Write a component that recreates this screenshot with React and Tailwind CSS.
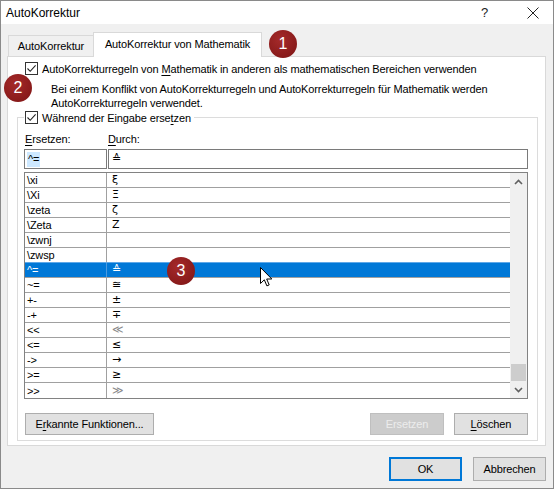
import React from "react";

const rows = [
  ["\\xi", "ξ"],
  ["\\Xi", "Ξ"],
  ["\\zeta", "ζ"],
  ["\\Zeta", "Ζ"],
  ["\\zwnj", ""],
  ["\\zwsp", ""],
  ["^=", "≙", true],
  ["~=", "≅"],
  ["+-", "±"],
  ["-+", "∓"],
  ["<<", "≪", false, true],
  ["<=", "≤"],
  ["->", "→"],
  [">=", "≥"],
  [">>", "≫", false, true],
];

function Check() {
  return (
    <span className="w-[13px] h-[13px] border border-[#333333] bg-white flex items-center justify-center shrink-0">
      <svg width="11" height="11" viewBox="0 0 11 11">
        <path d="M1.5 5.5 L4.2 8.3 L9.6 2.4" stroke="#222" strokeWidth="1.1" fill="none" />
      </svg>
    </span>
  );
}

function Badge({ n, className }) {
  return (
    <div
      className={`absolute w-[28px] h-[28px] rounded-full bg-[radial-gradient(circle_at_40%_35%,#a52a2a,#7d1414)] flex items-center justify-center text-white text-[16px] leading-none font-['Liberation_Sans',sans-serif] ${className}`}
    >
      {n}
    </div>
  );
}

function Btn({ children, className = "" }) {
  return (
    <div
      className={`h-[22px] bg-[#e1e1e1] border border-[#adadad] flex items-center justify-center ${className}`}
    >
      {children}
    </div>
  );
}

export default function App() {
  return (
    <div className="w-[554px] h-[489px] bg-[#f0f0f0] border border-[#8a8a8a] flex flex-col relative overflow-hidden text-[11px] tracking-[-0.12px] text-black font-['Liberation_Sans',Arial,sans-serif] leading-[14px]">
      {/* title bar */}
      <div className="h-[23px] bg-white flex items-center pl-[5px] pr-[14px] shrink-0 pt-[1px]">
        <span className="text-[12px] tracking-normal">AutoKorrektur</span>
        <span className="ml-auto mr-[39px] text-[13px] text-[#222]">?</span>
        <svg width="12" height="12" viewBox="0 0 12 12">
          <path d="M0.5 0.5 L11.5 11.5 M11.5 0.5 L0.5 11.5" stroke="#222" strokeWidth="1" />
        </svg>
      </div>

      {/* body */}
      <div className="flex flex-col pl-[6px] shrink-0">
        {/* tabs */}
        <div className="h-[32px] flex items-end pl-[1px]">
          <div className="w-[85px] h-[21px] border-t border-l border-[#d9d9d9] bg-[#f0f0f0] flex items-center justify-center">
            AutoKorrektur
          </div>
          <div className="relative z-10 -mb-[1px] w-[169px] h-[25px] border-t border-x border-[#d9d9d9] bg-white flex items-center justify-center pb-[2px]">
            AutoKorrektur von Mathematik
          </div>
        </div>

        {/* panel */}
        <div className="w-[539px] h-[390px] bg-white border border-[#d9d9d9] flex flex-col pl-[9px] pt-[5px]">
          <div className="flex items-center h-[13px] pl-[8px]">
            <Check />
            <span className="ml-[4px]">
              AutoKorrekturregeln von <u className="underline-offset-2">M</u>athematik in anderen als mathematischen Bereichen verwenden
            </span>
          </div>
          <div className="pl-[34px] mt-[7px]">
            Bei einem Konflikt von AutoKorrekturregeln und AutoKorrekturregeln für Mathematik werden
            <br />
            AutoKorrekturregeln verwendet.
          </div>

          <fieldset className="mt-[1px] w-[521px] border border-[#dcdcdc] pl-[6px] pr-[9px] pb-[5px]">
            <legend className="pl-[1px] pr-[3px]">
              <div className="flex items-center h-[13px]">
                <Check />
                <span className="ml-[4px]">
                  Während der Eingabe erse<u className="underline-offset-2">t</u>zen
                </span>
              </div>
            </legend>

            <div className="pt-[8px] flex">
              <div className="w-[84px] pl-[1px]">
                <u className="underline-offset-2">E</u>rsetzen:
              </div>
              <div>
                <u className="underline-offset-2">D</u>urch:
              </div>
            </div>

            <div className="mt-[3px] flex gap-[1px]">
              <div className="w-[83px] h-[20px] border border-[#7a7a7a] bg-white flex items-center pl-[2px]">
                <span className="bg-[#cde8ff] px-[1px] leading-[15px]">^=</span>
              </div>
              <div className="flex-1 h-[20px] border border-[#7a7a7a] bg-white flex items-center pl-[3px] font-['DejaVu_Sans',sans-serif] text-[11px]">
                ≙
              </div>
            </div>

            {/* list */}
            <div className="mt-[3px] w-[504px] h-[227px] border border-[#828282] bg-white flex">
              <div className="flex-1 flex flex-col">
                {rows.map(([a, b, sel, light], i) => (
                  <div
                    key={i}
                    className={`h-[15px] flex ${i < rows.length - 1 ? "border-b border-[#a0a0a0]" : ""} ${
                      sel ? "bg-[#0078d7] text-white border-t border-t-[#5fa8e8] -mt-[1px] h-[16px]" : ""
                    }`}
                  >
                    <div
                      className={`w-[82px] pl-[2px] border-r ${
                        sel ? "border-[#4c9be0]" : "border-[#a0a0a0]"
                      } flex items-center`}
                    >
                      {a}
                    </div>
                    <div
                      className={`pl-[5px] flex items-center font-['DejaVu_Sans',sans-serif] text-[11px] ${
                        light ? "text-[#8a8a8a]" : ""
                      }`}
                    >
                      {b}
                    </div>
                  </div>
                ))}
              </div>
              <div className="w-[17px] bg-[#f0f0f0] flex flex-col items-center">
                <div className="h-[17px] flex items-center justify-center">
                  <svg width="9" height="6" viewBox="0 0 9 6">
                    <path d="M1 5 L4.5 1.5 L8 5" stroke="#606060" strokeWidth="1.6" fill="none" />
                  </svg>
                </div>
                <div className="flex-1" />
                <div className="w-[15px] h-[17px] bg-[#cdcdcd]" />
                <div className="h-[17px] flex items-center justify-center">
                  <svg width="9" height="6" viewBox="0 0 9 6">
                    <path d="M1 1 L4.5 4.5 L8 1" stroke="#606060" strokeWidth="1.6" fill="none" />
                  </svg>
                </div>
              </div>
            </div>

            <div className="mt-[14px] flex items-center pl-[1px]">
              <Btn className="w-[129px]">
                <span>
                  E<u className="underline-offset-2">r</u>kannte Funktionen...
                </span>
              </Btn>
              <div className="flex-1" />
              <div className="w-[74px] h-[22px] bg-[#cccccc] border border-[#bfbfbf] flex items-center justify-center text-[#ececec]">
                Ersetzen
              </div>
              <Btn className="w-[74px] ml-[10px]">
                <span>
                  <u className="underline-offset-2">L</u>öschen
                </span>
              </Btn>
            </div>
          </fieldset>
        </div>
      </div>

      {/* footer */}
      <div className="flex justify-end gap-[11px] pt-[11px] pr-[7px]">
        <div className="w-[73px] h-[24px] bg-[#e1e1e1] border-2 border-[#0078d7] flex items-center justify-center">
          OK
        </div>
        <div className="w-[73px] h-[24px] bg-[#e1e1e1] border border-[#adadad] flex items-center justify-center">
          Abbrechen
        </div>
      </div>

      {/* annotations */}
      <Badge n="1" className="left-[268px] top-[29px]" />
      <Badge n="2" className="left-[3px] top-[73px]" />
      <Badge n="3" className="left-[166px] top-[256px]" />

      {/* mouse cursor */}
      <svg className="absolute left-[259px] top-[266px]" width="13" height="21" viewBox="0 0 13 21">
        <path
          d="M0.5 0.5 L0.5 16.5 L4.3 12.8 L6.9 18.9 L9.2 17.9 L6.7 12 L11.8 12 Z"
          fill="white"
          stroke="black"
          strokeWidth="1"
          strokeLinejoin="round"
        />
      </svg>
    </div>
  );
}
